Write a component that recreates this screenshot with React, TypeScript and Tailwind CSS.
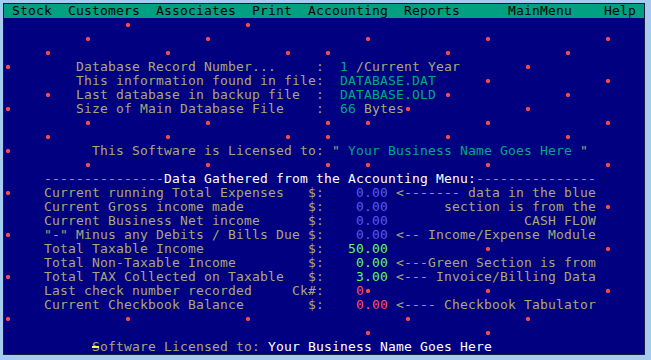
import React from 'react';

type Seg = [number, string, string];

const KH = 'text-[#aca77a]';
const TE = 'text-[#00a880]';
const BL = 'text-[#4c5cff]';
const GR = 'text-[#58ff58]';
const RD = 'text-[#ff5050]';
const WH = 'text-white';

const COLS = 80;
const ROWS = 25;

const dataRow = (label: string, value: string, valueColor: string, msg?: string, unit = '$:'): Seg[] => {
  const segs: Seg[] = [[5, label, KH], [40 - unit.length, unit, KH], [48 - value.length, value, valueColor]];
  if (msg) segs.push([49, msg, KH]);
  return segs;
};

const lines: Record<number, Seg[]> = {
  4: [[9, 'Database Record Number...     :', KH], [42, '1', TE], [43, ' /Current Year', KH]],
  5: [[9, 'This information found in file:', KH], [42, 'DATABASE.DAT', TE]],
  6: [[9, 'Last database in backup file  :', KH], [42, 'DATABASE.OLD', TE]],
  7: [[9, 'Size of Main Database File    :', KH], [42, '66', TE], [44, ' Bytes', KH]],
  10: [[11, 'This Software is Licensed to: "', KH], [42, ' Your Business Name Goes Here ', TE], [72, '"', KH]],
  12: [[5, '---------------', KH], [20, 'Data Gathered from the Accounting Menu:', WH], [59, '---------------', KH]],
  13: dataRow('Current running Total Expenses', '0.00', BL, '<------- data in the blue'),
  14: dataRow('Current Gross income made', '0.00', BL, '      section is from the'),
  15: dataRow('Current Business Net income', '0.00', BL, '                CASH FLOW'),
  16: dataRow('"-" Minus any Debits / Bills Due', '0.00', BL, '<-- Income/Expense Module'),
  17: dataRow('Total Taxable Income', '50.00', GR),
  18: dataRow('Total Non-Taxable Income', '0.00', GR, '<---Green Section is from'),
  19: dataRow('Total TAX Collected on Taxable', '3.00', GR, '<--- Invoice/Billing Data'),
  20: [[5, 'Last check number recorded', KH], [36, 'Ck#:', KH], [44, '0', RD]],
  21: dataRow('Current Checkbook Balance', '0.00', RD, '<---- Checkbook Tabulator'),
  24: [[11, 'Software Licensed to:', KH], [32, ' Your Business Name Goes Here', WH]],
};

// red "stars" left on the screen, by row -> columns
const dots: Record<number, number[]> = {
  1: [15, 30],
  2: [10, 25, 45, 60, 75],
  3: [5, 20, 35, 40, 55, 70],
  4: [0, 65],
  5: [60, 75],
  6: [5, 55, 70],
  7: [0, 50, 65],
  8: [10, 25, 40, 45, 60, 75],
  9: [5, 20, 35, 40, 55, 70],
  10: [0],
  11: [10, 25, 40, 45, 60, 75],
  13: [0],
  14: [75],
  16: [0],
  17: [60, 75],
  19: [0],
  20: [45, 60, 75],
  22: [0, 15, 30, 50, 65],
  23: [45, 60],
};

type Cell = { ch: string; color: string; dot?: boolean };
type Run = { text: string; color: string; dot?: boolean };

const buildRuns = (row: number): Run[] => {
  const cells: Cell[] = Array.from({ length: COLS }, () => ({ ch: ' ', color: KH }));
  (dots[row] || []).forEach((c) => {
    cells[c] = { ch: ' ', color: '', dot: true };
  });
  (lines[row] || []).forEach(([col, text, color]) => {
    text.split('').forEach((ch, i) => {
      if (col + i < COLS) cells[col + i] = { ch, color };
    });
  });

  const runs: Run[] = [];
  cells.forEach((cell) => {
    const last = runs[runs.length - 1];
    if (cell.dot) {
      runs.push({ text: ' ', color: '', dot: true });
    } else if (last && !last.dot && last.color === cell.color) {
      last.text += cell.ch;
    } else {
      runs.push({ text: cell.ch, color: cell.color });
    }
  });
  return runs;
};

const Dot: React.FC = () => (
  <span className="inline-block h-[14px] w-[8px] align-top">
    <svg width="8" height="14" viewBox="0 0 8 14" className="block">
      <rect x="3" y="5" width="2" height="4" fill="#ff4848" />
      <rect x="2" y="6" width="4" height="2" fill="#ff4848" />
      <rect x="2" y="5" width="4" height="4" fill="#ff4848" opacity="0.45" />
    </svg>
  </span>
);

const MENU = ' Stock  Customers  Associates  Print  Accounting  Reports      MainMenu    Help ';

const ScreenRow: React.FC<{ row: number }> = ({ row }) => {
  if (row === 0) {
    return (
      <div className="flex h-[14px] bg-[#00a080] text-black">
        <span className="whitespace-pre">{MENU}</span>
      </div>
    );
  }

  return (
    <div className="relative flex h-[14px]">
      {buildRuns(row).map((run, i) =>
        run.dot ? (
          <Dot key={i} />
        ) : (
          <span
            key={i}
            className={`inline-block shrink-0 overflow-visible whitespace-pre ${run.color}`}
            style={{ width: run.text.length * 8 }}
          >
            {run.text}
          </span>
        ),
      )}
      {row === 24 ? <span className="absolute left-[88px] top-[6px] h-[2px] w-[7px] bg-[#ffff40]" /> : null}
    </div>
  );
};

export default function App() {
  return (
    <div className="h-[360px] w-[651px] overflow-hidden bg-[#a6caf0] pl-[3px] pt-[3px]">
      <div className="w-[642px] border border-[#1a1a40]">
        <div
          className="flex h-[350px] w-[640px] flex-col bg-[#000080] text-[13px] leading-[14px] tracking-[0.173px]"
          style={{ fontFamily: '"DejaVu Sans Mono", "Liberation Mono", monospace' }}
        >
          {Array.from({ length: ROWS }, (_, r) => (
            <ScreenRow key={r} row={r} />
          ))}
        </div>
      </div>
    </div>
  );
}
